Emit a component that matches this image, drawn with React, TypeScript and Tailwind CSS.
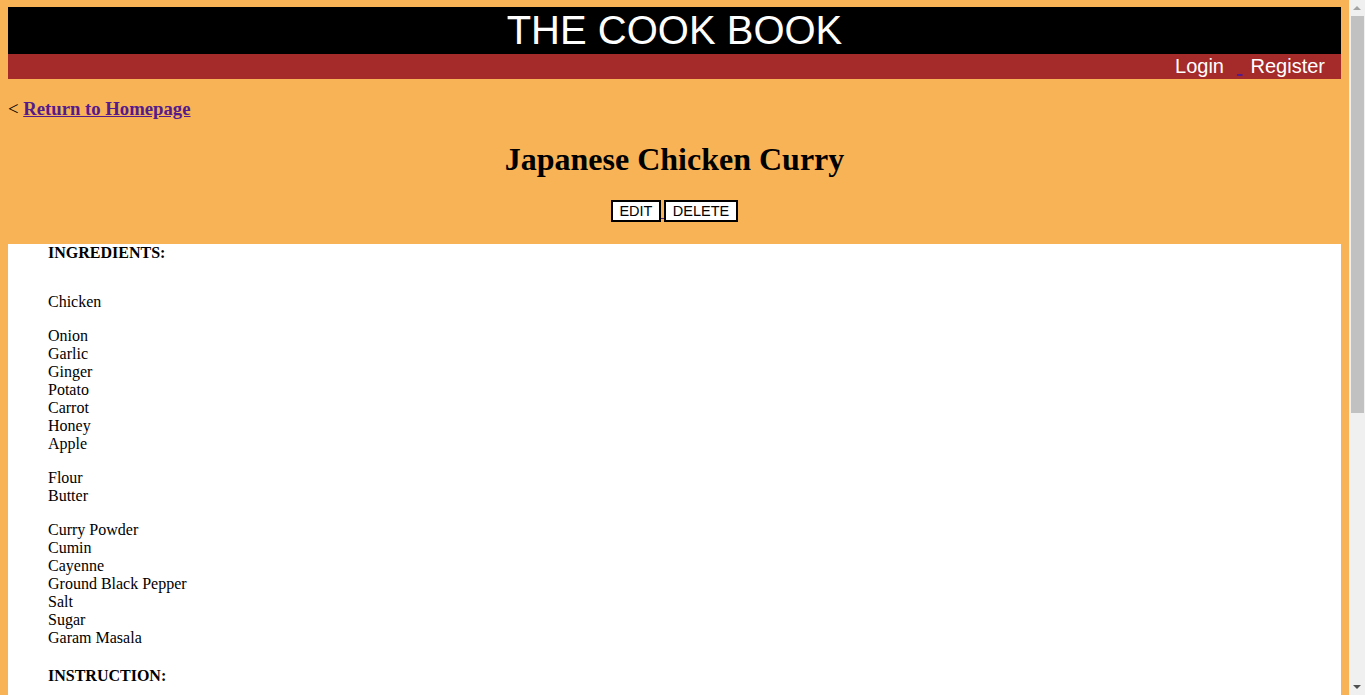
const groups = [
  ["Chicken"],
  ["Onion", "Garlic", "Ginger", "Potato", "Carrot", "Honey", "Apple"],
  ["Flour", "Butter"],
  [
    "Curry Powder",
    "Cumin",
    "Cayenne",
    "Ground Black Pepper",
    "Salt",
    "Sugar",
    "Garam Masala",
  ],
];

export default function App() {
  return (
    <div className="flex items-start bg-[#f8b357]">
      <div className="min-h-screen w-[1349px] shrink-0 px-[8px] pt-[7px] font-['Liberation_Serif',serif] text-black">
        {/* Header */}
        <header>
          <div className="h-[47px] bg-black text-center font-['Liberation_Sans',Arial,sans-serif] text-[40px] leading-[47px] text-white">
            THE COOK BOOK
          </div>
          <nav className="h-[25px] bg-[#a52a2a] pr-[16px] text-right font-['Liberation_Sans',Arial,sans-serif] text-[20px] leading-[25px] text-white">
            <a href="#" className="mr-[13px]">
              Login
            </a>
            <a href="#" className="text-[#551a8b] underline">
              &nbsp;
            </a>
            <a href="#" className="ml-[8px]">
              Register
            </a>
          </nav>
        </header>

        {/* Back link */}
        <h3 className="mt-[19px] text-[18.72px] leading-[22px]">
          &lt;{" "}
          <a href="#" className="font-bold text-[#551a8b] underline">
            Return to Homepage
          </a>
        </h3>

        {/* Title + actions */}
        <h1 className="mt-[21px] text-center text-[32px] font-bold leading-[37px]">
          Japanese Chicken Curry
        </h1>
        <div className="mt-[22px] flex items-end justify-center font-['Liberation_Sans',Arial,sans-serif]">
          <button className="h-[22px] w-[50px] border-2 border-black bg-white text-center text-[14.5px] leading-[18px]">
            EDIT
          </button>
          <a href="#" className="text-[11px] leading-[18px] text-[#551a8b] underline">
            &nbsp;
          </a>
          <button className="h-[22px] w-[74px] border-2 border-black bg-white text-center text-[14.5px] leading-[18px]">
            DELETE
          </button>
        </div>

        {/* Recipe body */}
        <section className="mt-[22px] bg-white pb-[300px] pl-[40px] text-[16px] leading-[18px]">
          <h4 className="font-bold">INGREDIENTS:</h4>
          <div className="mt-[31px] flex flex-col gap-[16px]">
            {groups.map((group, i) => (
              <ul key={i}>
                {group.map((item) => (
                  <li key={item}>{item}</li>
                ))}
              </ul>
            ))}
          </div>
          <h4 className="mt-[20px] font-bold">INSTRUCTION:</h4>
        </section>
      </div>

      {/* Window scrollbar */}
      <div className="sticky top-0 flex h-screen w-[16px] shrink-0 flex-col bg-[#f0f0f0]">
        <div className="flex h-[16px] items-center justify-center">
          <svg width="8" height="4" viewBox="0 0 8 4">
            <path d="M0 4 L4 0 L8 4 Z" fill="#a3a3a3" />
          </svg>
        </div>
        <div className="flex-1 pl-[2px] pr-[1px]">
          <div className="h-[397px] bg-[#c1c1c1]" />
        </div>
        <div className="flex h-[16px] items-center justify-center">
          <svg width="8" height="4" viewBox="0 0 8 4">
            <path d="M0 0 L8 0 L4 4 Z" fill="#505050" />
          </svg>
        </div>
      </div>
    </div>
  );
}
